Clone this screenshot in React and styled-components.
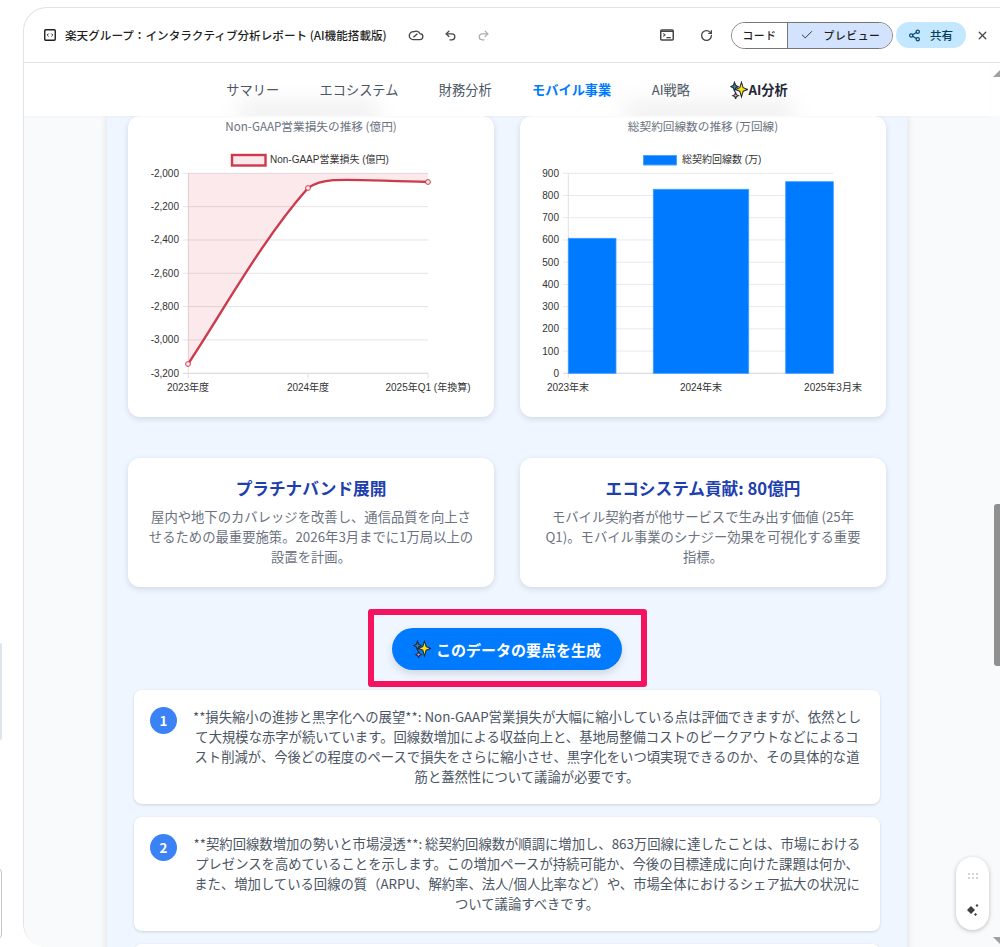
import React from 'react';
import styled, { createGlobalStyle } from 'styled-components';
import { Check, RotateCw, Undo2, Redo2, Share2, X } from 'lucide-react';

const GlobalStyle = createGlobalStyle`
  html, body {
    margin: 0;
    padding: 0;
    background: #ffffff;
  }
  body {
    font-family: "Noto Sans CJK JP", "Noto Sans", sans-serif;
  }
`;

const Page = styled.div`
  position: relative;
  width: 1000px;
  height: 947px;
  overflow: hidden;
  padding: 7px 0 0 23px;
  box-sizing: border-box;
  background: #ffffff;
`;

const Panel = styled.div`
  position: relative;
  display: flex;
  flex-direction: column;
  width: 977px;
  height: 940px;
  box-sizing: border-box;
  overflow: hidden;
  border: 1px solid #e1e3e6;
  border-right: none;
  border-bottom: none;
  border-radius: 24px 0 0 24px;
  background: #ffffff;
`;

const Header = styled.header`
  display: flex;
  align-items: center;
  flex: none;
  height: 55px;
  padding: 0 11px 0 20px;
  box-sizing: border-box;
  border-bottom: 1px solid #e1e3e6;
  color: #1f1f1f;
`;

const Title = styled.div`
  margin-left: 9px;
  font-size: 11.6px;
  font-weight: 500;
  white-space: nowrap;
`;

const HeaderIcons = styled.div`
  display: flex;
  align-items: center;
  gap: 20px;
  margin-left: ${props => props.offset || 21}px;
`;

const Spacer = styled.div`
  flex: 1;
`;

const Toggle = styled.div`
  display: flex;
  height: 27px;
  box-sizing: border-box;
  margin-left: 18px;
  border: 1px solid #747775;
  border-radius: 14px;
  overflow: hidden;
  font-size: 10.8px;
  font-weight: 500;
`;

const ToggleItem = styled.div`
  display: flex;
  align-items: center;
  justify-content: center;
  gap: 10px;
  width: ${props => props.active ? '104px' : '55px'};
  background: ${props => props.active ? '#d3e3fd' : '#ffffff'};
  border-left: ${props => props.active ? '1px solid #747775' : 'none'};
  letter-spacing: 0.6px;
`;

const ShareButton = styled.div`
  display: flex;
  align-items: center;
  gap: 9px;
  height: 26px;
  margin-left: 3px;
  padding: 0 13px 0 12px;
  border-radius: 13px;
  background: #c2e7ff;
  color: #0a3d5c;
  font-size: 11.5px;
  font-weight: 500;
`;

const CloseButton = styled.div`
  display: flex;
  margin-left: 10px;
`;

const Nav = styled.nav`
  position: relative;
  z-index: 2;
  display: flex;
  justify-content: center;
  align-items: center;
  gap: 40.5px;
  flex: none;
  width: 966px;
  height: 53px;
  overflow: hidden;
  background: #ffffff;
  font-size: 13.2px;
  box-shadow: 0 1px 2px rgba(0, 0, 0, 0.03);
`;

const NavItem = styled.span`
  position: relative;
  display: flex;
  align-items: center;
  color: ${props => props.active ? '#007bff' : props.strong ? '#1f2937' : '#4b5563'};
  font-weight: ${props => props.active || props.strong ? 700 : 400};
  white-space: nowrap;
`;

// backdrop blur of the card titles scrolled under the nav
const NavSmear = styled.div`
  position: absolute;
  left: ${props => props.left}px;
  bottom: -10px;
  width: ${props => props.width}px;
  height: 26px;
  background: rgba(0, 0, 0, 0.05);
  filter: blur(10px);
`;

const Scroller = styled.main`
  flex: 1;
  min-height: 0;
  padding-left: 83px;
  background: #f9fafb;
  overflow: hidden;
`;

const Column = styled.div`
  width: 800px;
  min-height: 100%;
  padding: 0 21px;
  box-sizing: border-box;
  background: #eff6ff;
  box-shadow: 0 0 8px rgba(0, 0, 0, 0.12);
`;

const TwoColumns = styled.div`
  display: grid;
  grid-template-columns: 366px 366px;
  gap: 26px;
  margin-bottom: 41px;
`;

const Card = styled.section`
  background: #ffffff;
  border-radius: 12px;
  box-shadow: 0 2px 6px rgba(0, 0, 0, 0.12);
`;

const ChartTitle = styled.div`
  height: 19px;
  line-height: 19px;
  text-align: center;
  font-size: 11.67px;
  color: #6b7280;
`;

const ChartSvg = styled.svg`
  display: block;
  width: 366px;
  height: 282px;
  font-family: "Liberation Sans", "Noto Sans CJK JP", sans-serif;
  font-size: 10px;
  fill: #333333;
`;

const InfoCard = styled(Card)`
  height: 129px;
  padding: 18px 20px 0;
  box-sizing: border-box;
  text-align: center;
`;

const InfoTitle = styled.h3`
  margin: 0 0 7px;
  font-size: 16.67px;
  line-height: 24px;
  font-weight: 700;
  color: #1e40af;
`;

const InfoText = styled.p`
  margin: 0;
  font-size: 13.33px;
  line-height: 20px;
  color: #6b7280;
`;

const ButtonRow = styled.div`
  display: flex;
  justify-content: center;
  margin-top: -19px;
  padding-left: 1px;
`;

const Highlight = styled.div`
  padding: 13px 19px 11px 18px;
  border: 6px solid #f5135f;
  border-radius: 3px;
`;

const GenerateButton = styled.button`
  display: flex;
  align-items: center;
  justify-content: center;
  gap: 5px;
  width: 230px;
  height: 42px;
  padding: 0;
  border: none;
  border-radius: 21px;
  background: #007bff;
  color: #ffffff;
  font-family: inherit;
  font-size: 15px;
  font-weight: 700;
  box-shadow: 0 4px 8px rgba(0, 0, 0, 0.12);
`;

const Points = styled.div`
  display: flex;
  flex-direction: column;
  gap: 13px;
  margin: 3px 6px 0;
`;

const Point = styled.div`
  display: flex;
  gap: 15px;
  padding: 17px 18px 17px 16px;
  background: #ffffff;
  border-radius: 8px;
  box-shadow: 0 1px 3px rgba(0, 0, 0, 0.14);
  min-height: 80px;
`;

const PointNumber = styled.div`
  display: flex;
  align-items: center;
  justify-content: center;
  flex: none;
  width: 27px;
  height: 27px;
  border-radius: 50%;
  background: #3b82f6;
  color: #ffffff;
  font-size: 13.33px;
  font-weight: 700;
`;

const PointText = styled.p`
  margin: 0;
  flex: 1;
  text-align: center;
  font-size: 13.33px;
  line-height: 20px;
  color: #4b5563;
`;

const ScrollTrack = styled.div`
  position: absolute;
  top: 70px;
  right: 0;
  bottom: 3px;
  width: 7px;
`;

const ScrollThumb = styled.div`
  position: absolute;
  top: 434px;
  right: 0;
  width: 6px;
  height: 162px;
  background: #909090;
  border-radius: 3px 0 0 3px;
`;

const ArrowUp = styled.div`
  position: absolute;
  top: 0;
  right: 0;
  border-left: 7px solid transparent;
  border-bottom: 7px solid #a0a0a0;
`;

const ArrowDown = styled.div`
  position: absolute;
  bottom: 0;
  right: 0;
  border-left: 7px solid transparent;
  border-top: 7px solid #a0a0a0;
`;

const FloatingPill = styled.div`
  position: absolute;
  left: 956px;
  top: 857px;
  display: flex;
  flex-direction: column;
  align-items: center;
  justify-content: space-between;
  width: 33px;
  height: 73px;
  padding: 15px 0 13px;
  box-sizing: border-box;
  background: #ffffff;
  border-radius: 17px;
  box-shadow: 0 1px 4px rgba(0, 0, 0, 0.25);
`;

const EdgeTab = styled.div`
  position: absolute;
  left: 0;
  top: 643px;
  width: 2px;
  height: 97px;
  background: #dfe5ee;
  border-radius: 0 3px 3px 0;
`;

const EdgeBox = styled.div`
  position: absolute;
  left: -10px;
  top: 867px;
  width: 12px;
  height: 73px;
  box-sizing: border-box;
  border: 1px solid #c4c7c5;
  border-radius: 8px;
`;

const CodeIcon = () => (
  <svg width="12" height="12" viewBox="0 0 12 12" fill="none" stroke="#1f1f1f">
    <rect x="0.75" y="0.75" width="10.5" height="10.5" rx="1" strokeWidth="1.4" />
    <path d="M4.6 4.6 3.2 6l1.4 1.4M7.4 4.6 8.8 6 7.4 7.4" strokeWidth="1" />
  </svg>
);

const CloudIcon = () => (
  <svg width="16" height="16" viewBox="0 0 24 24" fill="none" stroke="#444746" strokeWidth="2">
    <path d="M17.5 19H8a6 6 0 1 1 1-11.9A6.5 6.5 0 0 1 18 10a4.5 4.5 0 0 1-.5 9Z" />
    <path d="M8 15.5l1.5-1.2L14 10" />
  </svg>
);

const TerminalIcon = () => (
  <svg width="14" height="12" viewBox="0 0 14 12" fill="none" stroke="#444746">
    <rect x="0.75" y="0.9" width="12.5" height="10.2" rx="1" strokeWidth="1.5" />
    <path d="M1 2.4h12" strokeWidth="1.2" />
    <path d="M3.2 4.4 5 5.9 3.2 7.4" strokeWidth="1.1" />
    <path d="M6.4 8.6h4.4" strokeWidth="1.3" />
  </svg>
);

const Sparkles = ({ size = 16 }) => (
  <svg width={size} height={size} viewBox="0 0 16 16">
    <path d="M4 1 5 3.8 7.4 5 5 6.2 4 9 3 6.2 .6 5 3 3.8Z" fill="#3f7fa8" stroke="#1f2a33" strokeWidth="0.9" />
    <path d="M5 10 5.7 12.1 7.6 13 5.7 13.9 5 16 4.3 13.9 2.4 13 4.3 12.1Z" fill="#e9a3c4" stroke="#1f2a33" strokeWidth="0.9" />
    <path d="M10.2 1 11.7 5.9 15.8 7.5 11.7 9.1 10.2 14.2 8.7 9.1 4.6 7.5 8.7 5.9Z" fill="#ffe01b" stroke="#1f2a33" strokeWidth="0.9" />
  </svg>
);

const LossChart = () => {
  const ticks = ['-2,000', '-2,200', '-2,400', '-2,600', '-2,800', '-3,000', '-3,200'];
  const line = 'M188 364C225 308 262 240 308 188C325 176 345 180 428 182';
  return (
    <ChartSvg viewBox="128 135 366 282">
      <rect x="232" y="155" width="33.5" height="10.5" fill="#fae9eb" stroke="#cc3a4b" strokeWidth="2.4" />
      <text x="270" y="163">Non-GAAP営業損失 (億円)</text>
      {ticks.map((t, i) => {
        const y = 173.3 + i * 33.33;
        return (
          <g key={t}>
            <line x1="183" x2="428" y1={y} y2={y} stroke={i === 6 ? '#d4d4d8' : '#e5e5e5'} />
            <text x="179" y={y + 3.5} textAnchor="end">{t}</text>
          </g>
        );
      })}
      <line x1="188.3" x2="188.3" y1="173.3" y2="378" stroke="#e0e0e0" />
      <line x1="308" x2="308" y1="373.3" y2="378" stroke="#e0e0e0" />
      <line x1="428" x2="428" y1="373.3" y2="378" stroke="#e0e0e0" />
      <path d={`${line}L428 173.3L188 173.3Z`} fill="rgba(220,53,69,0.11)" />
      <path d={line} fill="none" stroke="#cc3a4b" strokeWidth="2.4" />
      <circle cx="188" cy="364" r="2.4" fill="#fae9eb" stroke="#cc3a4b" />
      <circle cx="308" cy="188" r="2.4" fill="#fae9eb" stroke="#cc3a4b" />
      <circle cx="428" cy="182" r="2.4" fill="#fae9eb" stroke="#cc3a4b" />
      <text x="188" y="391" textAnchor="middle">2023年度</text>
      <text x="308" y="391" textAnchor="middle">2024年度</text>
      <text x="428" y="391" textAnchor="middle">2025年Q1 (年換算)</text>
    </ChartSvg>
  );
};

const LinesChart = () => {
  const ticks = [900, 800, 700, 600, 500, 400, 300, 200, 100, 0];
  const bars = [
    { x: 568.3, w: 47.7, y: 238.3 },
    { x: 653.3, w: 95.4, y: 189.3 },
    { x: 785.7, w: 47.6, y: 181.7 },
  ];
  return (
    <ChartSvg viewBox="520 135 366 282">
      <rect x="643.5" y="155.5" width="33" height="9.5" fill="#007bff" stroke="#4da3ff" />
      <text x="682" y="163">総契約回線数 (万)</text>
      {ticks.map((t, i) => {
        const y = 173.3 + i * 22.22;
        return (
          <g key={t}>
            <line x1="563" x2="833.3" y1={y} y2={y} stroke={i === 9 ? '#d4d4d8' : '#e8e8e8'} />
            <text x="559" y={y + 3.5} textAnchor="end">{t}</text>
          </g>
        );
      })}
      <line x1="568.3" x2="568.3" y1="173.3" y2="378" stroke="#e0e0e0" />
      {bars.map(b => (
        <rect key={b.x} x={b.x} y={b.y} width={b.w} height={373.3 - b.y} fill="#007bff" stroke="#3d9bff" strokeWidth="0.8" />
      ))}
      <text x="568" y="391" textAnchor="middle">2023年末</text>
      <text x="701" y="391" textAnchor="middle">2024年末</text>
      <text x="833" y="391" textAnchor="middle">2025年3月末</text>
    </ChartSvg>
  );
};

const App = () => {
  return (
    <Page>
      <GlobalStyle />
      <EdgeTab />
      <EdgeBox />
      <Panel>
        <Header>
          <CodeIcon />
          <Title>楽天グループ：インタラクティブ分析レポート (AI機能搭載版)</Title>
          <HeaderIcons>
            <CloudIcon />
            <Undo2 size={13} strokeWidth={2.4} color="#444746" />
            <Redo2 size={13} strokeWidth={2.2} color="#a8abad" />
          </HeaderIcons>
          <Spacer />
          <TerminalIcon />
          <HeaderIcons offset={26}>
            <RotateCw size={13} strokeWidth={2.4} color="#444746" />
          </HeaderIcons>
          <Toggle>
            <ToggleItem>コード</ToggleItem>
            <ToggleItem active>
              <Check size={14} strokeWidth={1.5} />
              プレビュー
            </ToggleItem>
          </Toggle>
          <ShareButton>
            <Share2 size={13} strokeWidth={2.3} color="#0a4a75" />
            共有
          </ShareButton>
          <CloseButton>
            <X size={13} strokeWidth={2.4} color="#444746" />
          </CloseButton>
        </Header>
        <Nav>
          <NavSmear left={215} width={140} />
          <NavSmear left={600} width={170} />
          <NavItem>サマリー</NavItem>
          <NavItem>エコシステム</NavItem>
          <NavItem>財務分析</NavItem>
          <NavItem active>モバイル事業</NavItem>
          <NavItem>AI戦略</NavItem>
          <NavItem strong><Sparkles size={18} />AI分析</NavItem>
        </Nav>
        <Scroller>
          <Column>
            <TwoColumns>
              <Card>
                <ChartTitle>Non-GAAP営業損失の推移 (億円)</ChartTitle>
                <LossChart />
              </Card>
              <Card>
                <ChartTitle>総契約回線数の推移 (万回線)</ChartTitle>
                <LinesChart />
              </Card>
            </TwoColumns>
            <TwoColumns>
              <InfoCard>
                <InfoTitle>プラチナバンド展開</InfoTitle>
                <InfoText>屋内や地下のカバレッジを改善し、通信品質を向上させるための最重要施策。2026年3月までに1万局以上の設置を計画。</InfoText>
              </InfoCard>
              <InfoCard>
                <InfoTitle>エコシステム貢献: 80億円</InfoTitle>
                <InfoText>モバイル契約者が他サービスで生み出す価値 (25年Q1)。モバイル事業のシナジー効果を可視化する重要指標。</InfoText>
              </InfoCard>
            </TwoColumns>
            <ButtonRow>
              <Highlight>
                <GenerateButton><Sparkles size={18} />このデータの要点を生成</GenerateButton>
              </Highlight>
            </ButtonRow>
            <Points>
              <Point>
                <PointNumber>1</PointNumber>
                <PointText>**損失縮小の進捗と黒字化への展望**: Non-GAAP営業損失が大幅に縮小している点は評価できますが、依然として大規模な赤字が続いています。回線数増加による収益向上と、基地局整備コストのピークアウトなどによるコスト削減が、今後どの程度のペースで損失をさらに縮小させ、黒字化をいつ頃実現できるのか、その具体的な道筋と蓋然性について議論が必要です。</PointText>
              </Point>
              <Point>
                <PointNumber>2</PointNumber>
                <PointText>**契約回線数増加の勢いと市場浸透**: 総契約回線数が順調に増加し、863万回線に達したことは、市場におけるプレゼンスを高めていることを示します。この増加ペースが持続可能か、今後の目標達成に向けた課題は何か、また、増加している回線の質（ARPU、解約率、法人/個人比率など）や、市場全体におけるシェア拡大の状況について議論すべきです。</PointText>
              </Point>
              <Point />
            </Points>
          </Column>
        </Scroller>
      </Panel>
      <ScrollTrack>
        <ArrowUp />
        <ScrollThumb />
        <ArrowDown />
      </ScrollTrack>
      <FloatingPill>
        <svg width="12" height="8" viewBox="0 0 12 8" fill="#d4d4d4">
          <rect x="1" y="1" width="2" height="2" />
          <rect x="5" y="1" width="2" height="2" />
          <rect x="9" y="1" width="2" height="2" />
          <rect x="1" y="5" width="2" height="2" />
          <rect x="5" y="5" width="2" height="2" />
          <rect x="9" y="5" width="2" height="2" />
        </svg>
        <svg width="14" height="14" viewBox="0 0 14 14" fill="#3c4043">
          <path d="M5 3 9 7 5 11 1 7Z" />
          <path d="M11 1 12.5 2.5 11 4 9.5 2.5Z" />
          <path d="M9.5 10 11 11.5 9.5 13 8 11.5Z" />
        </svg>
      </FloatingPill>
    </Page>
  );
};

export default App;
